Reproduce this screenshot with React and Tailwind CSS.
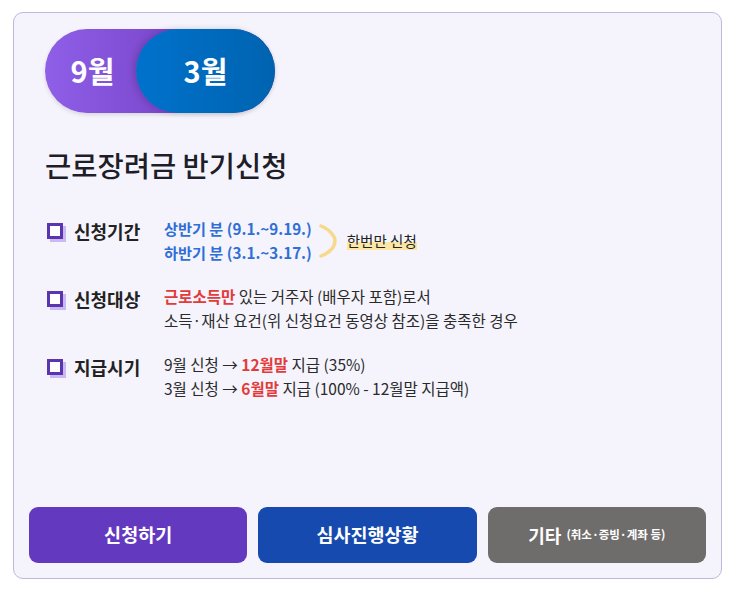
const font = { fontFamily: '"Noto Sans CJK KR", "Noto Sans", sans-serif' };

function CheckIcon() {
  return (
    <span className="relative mt-[6px] block h-[19px] w-[19px] shrink-0">
      <span className="absolute left-[3px] top-[3px] h-[16px] w-[16px] bg-[#c9b9f2]" />
      <span className="absolute left-0 top-0 h-[16px] w-[16px] border-[3px] border-[#5a35ad] bg-white" />
    </span>
  );
}

function Row({ label, children }) {
  return (
    <div className="flex items-start">
      <CheckIcon />
      <div className="ml-[8px] w-[90px] shrink-0 text-[18px] font-bold leading-[28px] text-[#222]">{label}</div>
      <div className="text-[15.5px] leading-[23.5px] text-[#2a2a2a]">{children}</div>
    </div>
  );
}

export default function App() {
  return (
    <div className="min-h-[592px] bg-white pl-[13px] pt-[12px]" style={font}>
      <div className="flex h-[567px] w-[709px] flex-col rounded-[10px] border border-[#bdb8dd] bg-[#f5f4fc]">
        <div className="pl-[31px] pt-[16px]">
          <div className="relative flex h-[84px] w-[230px] items-center rounded-full bg-gradient-to-r from-[#8f5fe8] to-[#6a32b4] shadow-[0_2px_4px_rgba(0,0,0,0.12)]">
            <span className="w-[95px] text-center text-[29px] font-bold text-white">9월</span>
            <div className="absolute right-0 top-0 flex h-[84px] w-[139px] items-center justify-center rounded-full bg-gradient-to-r from-[#0072cc] to-[#0063b0] shadow-[-3px_0_6px_rgba(0,0,0,0.15)]">
              <span className="text-[29px] font-bold text-white">3월</span>
            </div>
          </div>
        </div>

        <h1 className="mt-[32px] pl-[31px] text-[28.5px] font-medium leading-[40px] text-[#1e1e28]">근로장려금 반기신청</h1>

        <div className="mt-[32px] flex flex-col gap-[21px] pl-[33px]">
          <Row label="신청기간">
            <div className="flex items-center">
              <div className="text-[15.2px] font-semibold text-[#2f6fd6]">
                <div>상반기 분 (9.1.~9.19.)</div>
                <div>하반기 분 (3.1.~3.17.)</div>
              </div>
              <svg width="22" height="36" viewBox="0 0 22 36" className="ml-[5px]">
                <path d="M4 3 C 14 7, 18 14, 18 18 C 18 23, 14 29, 4 33" fill="none" stroke="#f6d98c" strokeWidth="3.5" strokeLinecap="round" />
              </svg>
              <span className="ml-[8px] bg-[linear-gradient(transparent_60%,#fbe6a6_60%)] text-[14.5px] leading-[19px] text-[#222]">한번만 신청</span>
            </div>
          </Row>
          <Row label="신청대상">
            <div>
              <span className="font-bold text-[#e23b3b]">근로소득만</span> 있는 거주자 (배우자 포함)로서
            </div>
            <div>소득·재산 요건(위 신청요건 동영상 참조)을 충족한 경우</div>
          </Row>
          <Row label="지급시기">
            <div>
              9월 신청 → <span className="font-bold text-[#e23b3b]">12월말</span> 지급 (35%)
            </div>
            <div>
              3월 신청 → <span className="font-bold text-[#e23b3b]">6월말</span> 지급 (100% - 12월말 지급액)
            </div>
          </Row>
        </div>

        <div className="mt-auto grid grid-cols-3 gap-[11px] px-[15px] pb-[15px]">
          <button className="flex h-[56px] items-center justify-center rounded-[9px] bg-[#6339c0] text-[18.5px] font-bold text-white">신청하기</button>
          <button className="flex h-[56px] items-center justify-center rounded-[9px] bg-[#164aaf] text-[18.5px] font-bold text-white">심사진행상황</button>
          <button className="flex h-[56px] items-center justify-center rounded-[9px] bg-[#6f6d6b] text-white">
            <span className="text-[18px] font-bold">기타</span>
            <span className="ml-[5px] text-[11.5px] font-bold">(취소·증빙·계좌 등)</span>
          </button>
        </div>
      </div>
    </div>
  );
}
